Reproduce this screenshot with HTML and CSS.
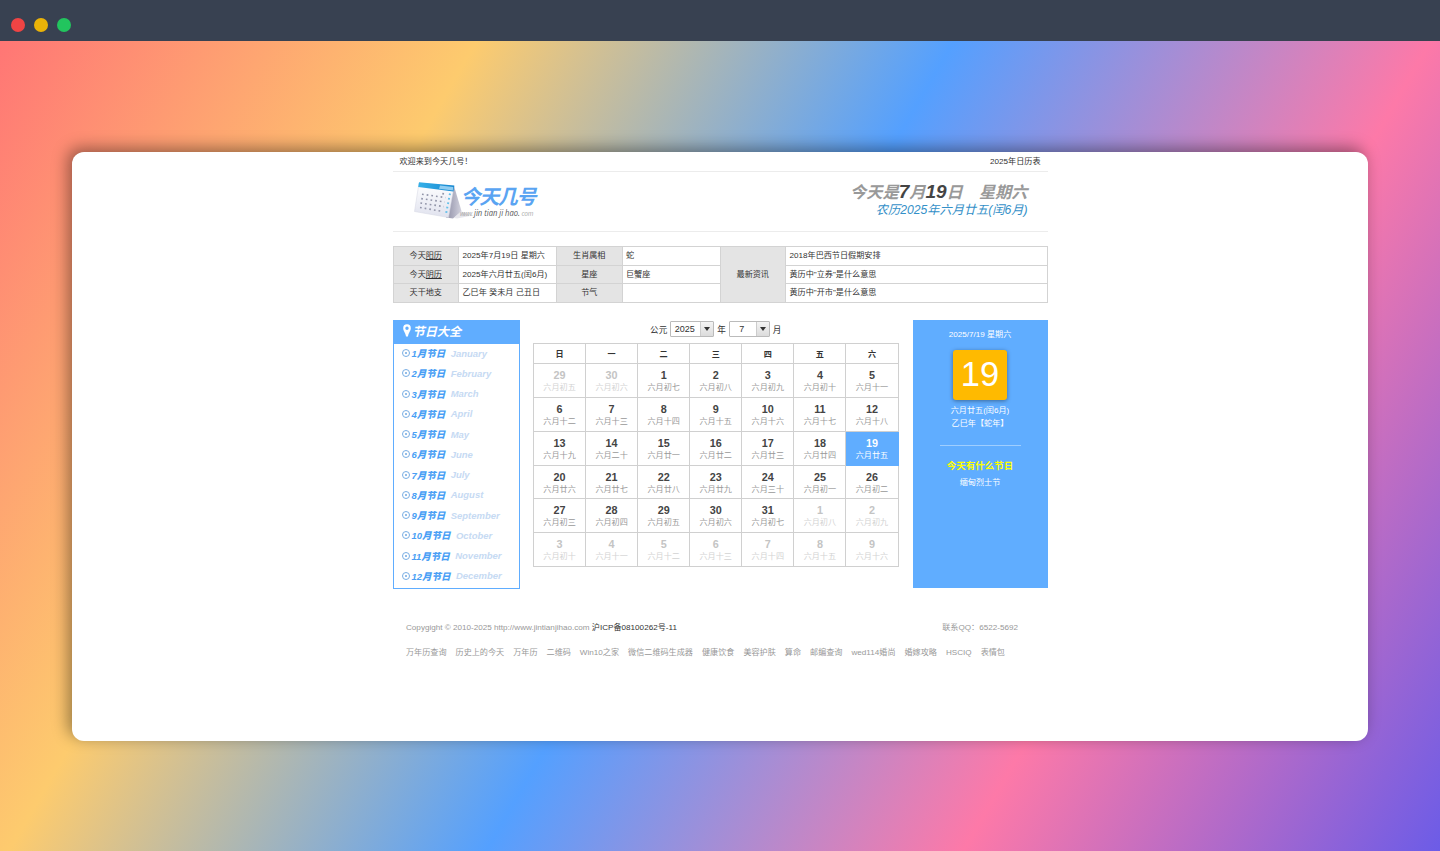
FILE: index.html
```
<!DOCTYPE html>
<html lang="zh-CN">
  <head>
    <meta charset="UTF-8" />
    <meta name="viewport" content="width=device-width, initial-scale=1.0" />
    <title>今天几号</title>
    <link rel="stylesheet" href="styles.css">
  </head>
  <body>
    <div class="titlebar">
      <span class="dot red"></span>
      <span class="dot yellow"></span>
      <span class="dot green"></span>
    </div>
    <div class="desktop">
      <div class="window">
        <div class="page">
          <div class="topbar">
            <span>欢迎来到今天几号！</span>
            <a>2025年日历表</a>
          </div>

          <div class="header">
            <svg class="logo" width="130" height="44" viewBox="0 0 130 44">
              <defs>
                <linearGradient id="side" x1="0" y1="0" x2="1" y2="0">
                  <stop offset="0" stop-color="#8f8fa6" />
                  <stop offset="1" stop-color="#d2d2de" />
                </linearGradient>
                <linearGradient id="sheet" x1="0" y1="0" x2="0" y2="1">
                  <stop offset="0" stop-color="#ffffff" />
                  <stop offset="1" stop-color="#e0e2ee" />
                </linearGradient>
                <linearGradient id="band" x1="0" y1="0" x2="1" y2="0">
                  <stop offset="0" stop-color="#35b0e8" />
                  <stop offset="1" stop-color="#1687d0" />
                </linearGradient>
              </defs>
              <path d="M40 38L47 31L56 36L43 38.5Z" fill="#e6e6ec" />
              <path d="M40 6L47.5 31L39 38.5L32 37.5Z" fill="url(#side)" />
              <path d="M5 3L40 6.5L34.5 37.5L.5 31.5Z" fill="url(#sheet)" stroke="#d5d7e2" stroke-width=".5" />
              <path d="M5 2.2L40.3 5.5L39.5 11.5L4.2 7Z" fill="url(#band)" />
              <path d="M26 5.5L39.3 6.9L38.8 10.4L25 8.7Z" fill="#8fcdf2" />
              <g fill="none" stroke="#9295a9" stroke-width="1.6" stroke-dasharray="1.7 3">
                <path d="M28.3 13.6L31 14" />
                <path d="M8 14.2L31.5 17.6" />
                <path d="M7.2 18.6L30.7 22" />
                <path d="M6.4 23L29.9 26.600" />
                <path d="M6 27.500L29 31.500" />
              </g>
              <path d="M36 13.5L31.800 35" fill="none" stroke="#65c0ea" stroke-width="2" stroke-dasharray="1.7 2.8" />
              <text class="logo-name" x="46.5" y="23.5" textLength="76">今天几号</text>
              <text class="logo-url light" x="46" y="35.5" textLength="13">www.</text>
              <text class="logo-url" x="60" y="35.5" textLength="46" lengthAdjust="spacingAndGlyphs">jin tian ji hao.</text>
              <text class="logo-url light" x="107.5" y="35.5" textLength="12">com</text>
            </svg>
            <div class="today">
              <p class="solar">今天是<b>7</b>月<b>19</b>日　星期六</p>
              <p class="lunar">农历2025年六月廿五(闰6月)</p>
            </div>
          </div>

          <div class="info">
            <div class="label">今天<u>阳历</u></div>
            <div>2025年7月19日 星期六</div>
            <div class="label">生肖属相</div>
            <div>蛇</div>
            <div class="label news">最新资讯</div>
            <div>2018年巴西节日假期安排</div>
            <div class="label">今天<u>阴历</u></div>
            <div>2025年六月廿五(闰6月)</div>
            <div class="label">星座</div>
            <div>巨蟹座</div>
            <div>黄历中"立券"是什么意思</div>
            <div class="label">天干地支</div>
            <div>乙巳年 癸未月 己丑日</div>
            <div class="label">节气</div>
            <div></div>
            <div>黄历中"开市"是什么意思</div>
          </div>

          <div class="main">
            <div class="festivals">
              <h2>
                <svg width="8" height="13" viewBox="0 0 8 13">
                  <path d="M4 .3A3.8 3.8 0 0 0 .2 4.2C.2 7.2 2.6 8.4 3 12.6H5C5.4 8.4 7.8 7.2 7.8 4.2A3.8 3.8 0 0 0 4 .3ZM4 2.5A1.7 1.7 0 1 1 4 5.9A1.7 1.7 0 0 1 4 2.5Z" fill="#fff" fill-rule="evenodd" />
                </svg>
                节日大全
              </h2>
              <ul id="months"></ul>
            </div>

            <div class="calendar">
              <div class="picker">
                公元
                <span class="select year"><span>2025</span><i></i></span>
                年
                <span class="select"><span>7</span><i></i></span>
                月
              </div>
              <div class="grid" id="grid"></div>
            </div>

            <div class="card">
              <p class="card-date">2025/7/19 星期六</p>
              <div class="big">19</div>
              <p class="card-lunar">六月廿五(闰6月)<br>乙巳年【蛇年】</p>
              <h3>今天有什么节日</h3>
              <p>缅甸烈士节</p>
            </div>
          </div>

          <div class="footer">
            <div class="copyright">
              <span>Copygight © 2010-2025 http://www.jintianjihao.com <a class="icp">沪ICP备08100262号-11</a></span>
              <span>联系QQ：6522-5692</span>
            </div>
            <div class="links">
              <a>万年历查询</a>
              <a>历史上的今天</a>
              <a>万年历</a>
              <a>二维码</a>
              <a>Win10之家</a>
              <a>微信二维码生成器</a>
              <a>健康饮食</a>
              <a>美容护肤</a>
              <a>算命</a>
              <a>邮编查询</a>
              <a>wed114婚尚</a>
              <a>婚嫁攻略</a>
              <a>HSCIQ</a>
              <a>表情包</a>
            </div>
          </div>
        </div>
      </div>
    </div>
    <script>
      let months = ["January", "February", "March", "April", "May", "June", "July",
        "August", "September", "October", "November", "December"];
      let lunar = ["初五", "初六", "初七", "初八", "初九", "初十", "十一",
        "十二", "十三", "十四", "十五", "十六", "十七", "十八",
        "十九", "二十", "廿一", "廿二", "廿三", "廿四", "廿五",
        "廿六", "廿七", "廿八", "廿九", "三十", "初一", "初二",
        "初三", "初四", "初五", "初六", "初七", "初八", "初九",
        "初十", "十一", "十二", "十三", "十四", "十五", "十六"];

      document.getElementById("months").innerHTML = months
        .map((name, i) => `<li><span class="bullet"></span><b>${i + 1}月节日</b><em>${name}</em></li>`)
        .join("");

      let html = "";
      for (let day of "日一二三四五六") {
        html += `<div class="weekday">${day}</div>`;
      }
      // the first cell is June 29
      lunar.forEach((text, i) => {
        let date = new Date(2025, 5, 29 + i);
        let cls = "day";
        if (date.getMonth() !== 6) cls += " other";
        else if (date.getDate() === 19) cls += " current";
        html += `<div class="${cls}"><b>${date.getDate()}</b><span>六月${text}</span></div>`;
      });
      document.getElementById("grid").innerHTML = html;
    </script>
  </body>
</html>
```
FILE: styles.css
```
* {
  box-sizing: border-box;
}

body {
  margin: 0;
  height: 851px;
  display: flex;
  flex-direction: column;
  overflow: hidden;
  font-family: "Liberation Sans", "Noto Sans CJK SC", sans-serif;
  font-size: 8.12px;
  color: #333;
}

p, h2, h3, ul {
  margin: 0;
  padding: 0;
}

.titlebar {
  height: 41px;
  background: #384151;
  display: flex;
  gap: 9px;
  padding: 18px 0 0 11.3px;
}

.dot {
  width: 14px;
  height: 14px;
  border-radius: 50%;
}

.red {
  background: #ef4444;
}

.yellow {
  background: #eab308;
}

.green {
  background: #22c55e;
}

.desktop {
  flex: 1;
  padding: 110.5px 72px 110px;
  background: linear-gradient(120deg, #ff7675 0%, #fdcb6e 25%, #54a0ff 50%, #fd79a8 75%, #6c5ce7 100%);
}

.window {
  height: 589.5px;
  background: #fff;
  border-radius: 12px;
  box-shadow: -4px -4px 16px rgba(0, 0, 0, 0.4);
}

.page {
  width: 655px;
  margin: 0 auto;
}

.topbar {
  display: flex;
  justify-content: space-between;
  height: 20.5px;
  line-height: 19px;
  padding: 0 7px;
  border-bottom: 1px solid #ececec;
}

.header {
  display: flex;
  justify-content: space-between;
  height: 60px;
  padding: 7.5px 20px 0 21px;
  border-bottom: 1px solid #ececec;
}

.logo-name {
  font-family: "Noto Sans CJK SC", sans-serif;
  font-size: 20px;
  font-weight: 700;
  font-style: italic;
  fill: #5aa4f2;
}

.logo-url {
  font-family: "Open Sans", sans-serif;
  font-size: 9px;
  font-style: italic;
  fill: #555;
}

.logo-url.light {
  font-size: 6.5px;
  fill: #aaa;
}

.today {
  text-align: right;
  font-style: italic;
}

.solar {
  font-size: 16.2px;
  line-height: 24px;
  font-weight: bold;
  color: #999;
}

.solar b {
  font-size: 19px;
  color: #444;
}

.lunar {
  font-size: 12.2px;
  line-height: 13px;
  color: #3490c8;
}

.info {
  display: grid;
  grid-template-columns: 65.5px 98px 65.5px 98px 65.5px 1fr;
  grid-auto-rows: 18.6px;
  margin-top: 14px;
  border-top: 1px solid #d3d3d3;
  border-left: 1px solid #d3d3d3;
}

.info div {
  line-height: 17.5px;
  padding-left: 3.5px;
  border-right: 1px solid #d3d3d3;
  border-bottom: 1px solid #d3d3d3;
}

.info .label {
  background: #e4e4e4;
  padding: 0;
  text-align: center;
}

.info .news {
  grid-row: span 3;
  line-height: 55px;
}

.main {
  display: flex;
  align-items: flex-start;
  margin-top: 17.4px;
}

.festivals {
  width: 127px;
  height: 268.5px;
  border: 1px solid #60adff;
  border-width: 0 1.5px 1.5px;
  margin-right: 13.5px;
}

.festivals h2 {
  display: flex;
  align-items: center;
  gap: 2px;
  height: 23.5px;
  padding: 0 0 2px 9px;
  background: #60adff;
  color: #fff;
  font-size: 12.2px;
  font-style: italic;
}

.festivals ul {
  list-style: none;
}

.festivals li {
  display: flex;
  align-items: center;
  height: 20.25px;
  padding: 0 0 1.5px 8px;
  font-size: 9.48px;
  font-weight: bold;
  font-style: italic;
  color: #4a9ff5;
}

.festivals em {
  margin-left: 5.5px;
  color: #c6daf3;
}

/* ring with a dot in the middle */
.bullet {
  width: 8px;
  height: 8px;
  margin-right: 2px;
  border: 1px solid #79aee4;
  border-radius: 50%;
  background: radial-gradient(circle, #4a90d8 0.5px, transparent 1px);
}

.calendar {
  width: 365.5px;
  margin-right: 14px;
}

.picker {
  display: flex;
  justify-content: center;
  align-items: center;
  gap: 3px;
  height: 22.4px;
  padding-bottom: 4px;
  font-size: 8.6px;
}

.select {
  display: flex;
  width: 41px;
  height: 16px;
  border: 1px solid #bbb;
  border-radius: 1px;
}

.select.year {
  width: 44px;
}

.select span {
  flex: 1;
  line-height: 15px;
  padding-right: 2px;
  text-align: center;
  font-size: 9px;
}

.select i {
  width: 13px;
  display: flex;
  align-items: center;
  justify-content: center;
  border-left: 1px solid #ccc;
  background: linear-gradient(#f4f4f4, #dcdcdc);
}

.select i::after {
  content: "";
  border: 3.5px solid transparent;
  border-top: 4px solid #333;
  border-bottom: 0;
}

.grid {
  display: grid;
  grid-template-columns: repeat(7, 1fr);
  grid-template-rows: 20.8px repeat(6, 33.75px);
  border-top: 1px solid #d0d0d0;
  border-left: 1px solid #d0d0d0;
}

.grid div {
  text-align: center;
  border-right: 1px solid #d0d0d0;
  border-bottom: 1px solid #d0d0d0;
}

.weekday {
  line-height: 21px;
  font-weight: bold;
}

.day {
  padding-top: 5px;
  color: #999;
}

.day b {
  display: block;
  font-size: 10.8px;
  line-height: 12px;
  color: #444;
}

.day span {
  display: block;
  line-height: 13px;
}

.day.other {
  color: #d3d3d3;
}

.day.other b {
  color: #c4c4c4;
}

.day.current {
  background: #60adff;
  border-color: #60adff;
}

.day.current, .day.current b {
  color: #fff;
}

.card {
  width: 135px;
  height: 268px;
  background: #60adff;
  color: #fff;
  text-align: center;
}

.card-date {
  padding-top: 8px;
  line-height: 14px;
}

.big {
  width: 54px;
  height: 50.5px;
  margin: 7.5px auto 3.5px;
  line-height: 48.5px;
  font-size: 34.5px;
  background: #ffba00;
  border-radius: 3px;
  box-shadow: 0 1px 4px rgba(0, 0, 0, 0.4);
}

.card-lunar {
  width: 81px;
  margin: 0 auto 12.5px;
  padding-bottom: 14px;
  line-height: 13.5px;
  border-bottom: 1px solid #9fceff;
}

.card h3 {
  font-size: 9.48px;
  line-height: 15px;
  margin-bottom: 2px;
  color: #ff0;
}

.card p:last-child {
  line-height: 15px;
}

.footer {
  padding: 32.5px 29.5px 0 13.5px;
  color: #999;
}

.copyright {
  display: flex;
  justify-content: space-between;
  line-height: 13px;
}

.icp {
  color: #333;
}

.links {
  display: flex;
  gap: 9px;
  margin-top: 11.5px;
  line-height: 13px;
  white-space: nowrap;
}
```
